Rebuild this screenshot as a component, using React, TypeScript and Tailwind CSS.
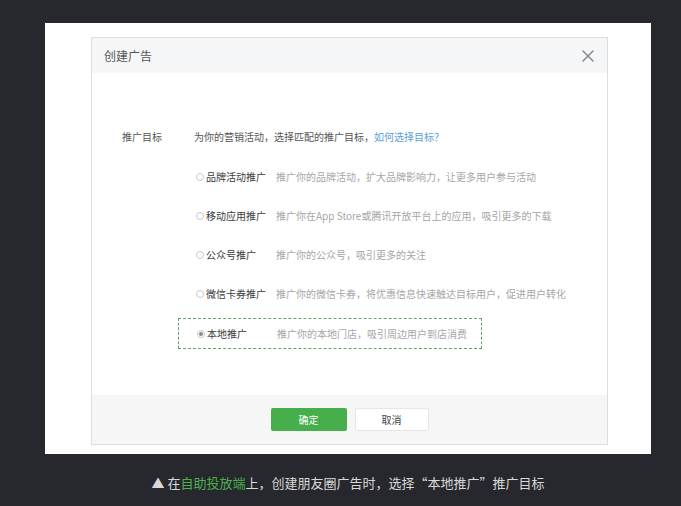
const options = [
  { name: '品牌活动推广', desc: '推广你的品牌活动，扩大品牌影响力，让更多用户参与活动' },
  { name: '移动应用推广', desc: '推广你在App Store或腾讯开放平台上的应用，吸引更多的下载' },
  { name: '公众号推广',   desc: '推广你的公众号，吸引更多的关注' },
  { name: '微信卡券推广', desc: '推广你的微信卡券，将优惠信息快速触达目标用户，促进用户转化' },
]

function Radio({ checked = false }: { checked?: boolean }) {
  return (
    <span className="w-[8px] h-[8px] rounded-full border border-[#c8c8c8] bg-white flex items-center justify-center shrink-0">
      {checked && <span className="w-[4px] h-[4px] rounded-full bg-[#8a8a8a]" />}
    </span>
  )
}

export default function App() {
  return (
    <div
      className="w-[681px] h-[506px] bg-[#27282d] overflow-hidden"
      style={{ fontFamily: '"Noto Sans CJK SC", "Noto Sans", sans-serif' }}
    >
      {/* white card */}
      <div className="ml-[45px] mt-[23px] w-[606px] h-[431px] bg-white pt-[14px] pl-[46px]">
        <div className="w-[517px] h-[408px] border border-[#dedede] flex flex-col">
          {/* header */}
          <div className="h-[35px] bg-[#f5f6f8] flex items-center justify-between pl-[12px] pr-[13px] shrink-0">
            <span className="text-[12px] text-[#555]">创建广告</span>
            <svg width="12" height="12" viewBox="0 0 12 12" className="text-[#8a8a8a]">
              <path d="M1 1 L11 11 M11 1 L1 11" stroke="currentColor" strokeWidth="1.5" strokeLinecap="round" />
            </svg>
          </div>

          {/* body */}
          <div className="flex-1 pt-[54px] text-[10px] leading-[20px]">
            <div className="flex items-center h-[20px]">
              <span className="ml-[30px] w-[72px] text-[#555]">推广目标</span>
              <span className="text-[#555]">
                为你的营销活动，选择匹配的推广目标，
                <span className="text-[#5b9fd6]">如何选择目标？</span>
              </span>
            </div>

            <div className="mt-[20px] flex flex-col gap-[19px]">
              {options.map(o => (
                <div key={o.name} className="flex items-center h-[20px] pl-[104px]">
                  <Radio />
                  <span className="ml-[2px] w-[70px] text-[#3a3a3a]">{o.name}</span>
                  <span className="text-[#a6a6a6]">{o.desc}</span>
                </div>
              ))}
            </div>

            <div className="ml-[86px] mt-[14px] w-[304px] h-[31px] border-[1.5px] border-dashed border-[#66a06a] flex items-center pl-[18px]">
              <Radio checked />
              <span className="ml-[2px] w-[70px] text-[#3a3a3a]">本地推广</span>
              <span className="text-[#a6a6a6]">推广你的本地门店，吸引周边用户到店消费</span>
            </div>
          </div>

          {/* footer */}
          <div className="h-[49px] bg-[#f6f6f6] flex items-center justify-center gap-[8px] shrink-0">
            <button className="w-[76px] h-[23px] rounded-[2px] bg-[#46ae4b] text-white text-[10px]">确定</button>
            <button className="w-[74px] h-[23px] rounded-[2px] bg-white border border-[#e6e6e6] text-[#444] text-[10px]">取消</button>
          </div>
        </div>
      </div>

      {/* caption */}
      <p className="ml-[45px] mt-[19px] w-[606px] text-center text-[13px] leading-[20px] text-[#d8d8d8]">
        ▲&nbsp;在<span className="text-[#4caf50]">自助投放端</span>上，创建朋友圈广告时，选择“本地推广”推广目标
      </p>
    </div>
  )
}
